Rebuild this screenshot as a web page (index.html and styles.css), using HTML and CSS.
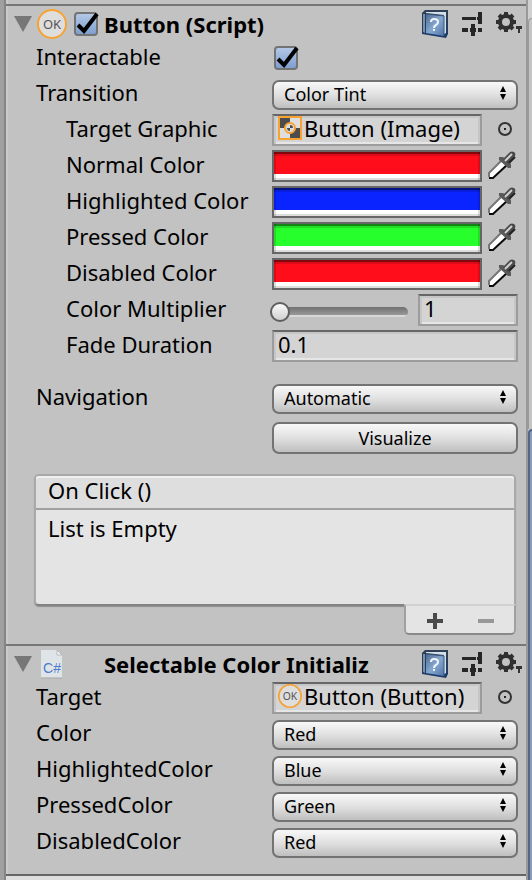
FILE: index.html
```html
<!DOCTYPE html>
<html lang="en">
<head>
<meta charset="utf-8">
<meta name="viewport" content="width=device-width">
<title>Inspector</title>
<link rel="stylesheet" href="styles.css">
</head>
<body>
<svg class="defs" aria-hidden="true">
  <defs>
    <linearGradient id="cover" x1="0" y1="0" x2="1" y2="1">
      <stop offset="0" stop-color="#4a6a94"/><stop offset=".5" stop-color="#86a8d0"/><stop offset="1" stop-color="#4f75a6"/>
    </linearGradient>
    <linearGradient id="edge" x1="0" y1="0" x2="0" y2="1">
      <stop offset="0" stop-color="#2f4054"/><stop offset="1" stop-color="#1a3c6c"/>
    </linearGradient>
    <symbol id="book" viewBox="0 0 26 28">
      <path d="M0 3 3 0h23v24l-2 4-6-1L0 24z" fill="url(#edge)"/>
      <path d="M4 2h20v21l-2 1V5L4 3z" fill="#d5dfe9"/>
      <path d="M1 4h2v19l-2-1z" fill="#7d90a8"/>
      <path d="M4 4l18 2v20L4 23z" fill="url(#cover)"/>
      <path d="M4 4l18 2v20" fill="none" stroke="#3a567c"/>
      <path d="M9 12q0-3 3-3 4 0 4 3 0 2-2 3-2 1-2 3" fill="none" stroke="#f0f5fb" stroke-width="2"/>
      <rect x="11" y="19" width="2" height="2" fill="#f0f5fb"/>
    </symbol>
    <symbol id="preset" viewBox="0 0 20 24">
      <path d="M0 5h14v3H0zM16 0h4v12h-4V8h-1V5h1zM0 16h6v4H0zM9 12h4v4h1v4h-1v4H9v-4H8v-4h1zM16 16h4v4h-4z" fill="#262626"/>
    </symbol>
    <symbol id="gear" viewBox="0 0 26 24">
      <circle cx="10" cy="10" r="6" fill="none" stroke="#303030" stroke-width="4"/>
      <path d="M10 0v4M10 16v4M0 10h4M16 10h4M3 3l3 3M14 14l3 3M17 3l-3 3M6 14l-3 3" stroke="#303030" stroke-width="4"/>
      <path d="M20 14h6v3h-2v4h-2v-4h-2z" fill="#333"/>
    </symbol>
    <symbol id="ring" viewBox="0 0 16 16">
      <circle cx="8" cy="8" r="6" fill="none" stroke="#333" stroke-width="2"/>
      <rect x="7" y="7" width="2" height="2" fill="#222"/>
    </symbol>
    <symbol id="dropper" viewBox="0 0 28 28">
      <path d="M1 27v-5L15 8l5 5L6 26z" fill="#fff"/>
      <path d="M1 26v-4L15 8" fill="none" stroke="#777" stroke-width="2"/>
      <path d="M1 27h4L20 13" fill="none" stroke="#0a0a0a" stroke-width="2"/>
      <path d="M11 6h4l8 7v4h-3l-9-8z" fill="#5a5a5a"/>
      <path d="M15 8l7-7q2-1 4 0 2 1 1 4l-7 8z" fill="#4a4a4a"/>
      <path d="M17 10l7-7" stroke="#d0d0d0" stroke-width="2"/>
      <path d="M21 12l6-6" stroke="#222" stroke-width="2"/>
    </symbol>
    <symbol id="ok" viewBox="0 0 30 30">
      <circle cx="15" cy="15" r="14" fill="#dedede" stroke="#f7a233" stroke-width="2"/>
      <text x="15" y="20" text-anchor="middle" class="ok-text">OK</text>
    </symbol>
    <symbol id="image" viewBox="0 0 24 24">
      <rect x="1" y="1" width="22" height="22" fill="#dedede" stroke="#f7a233" stroke-width="2"/>
      <path d="M2 2h10v10H2zM12 12h10v10H12z" fill="#4c4c4c"/>
      <circle cx="12" cy="12" r="5" fill="#ddd" stroke="#f7a233" stroke-width="2"/>
      <path d="M12 9v3h3a3 3 0 0 0-3-3zM12 15v-3H9a3 3 0 0 0 3 3z" fill="#4c4c4c"/>
    </symbol>
    <symbol id="csharp" viewBox="0 0 22 30">
      <path d="M0 1h16l5 5v23H0z" fill="#dfe4e8"/>
      <path d="M16 1v5h5z" fill="#f7f7f7" stroke="#b5babd"/>
      <path d="M0 29h21" stroke="#a5a5a5"/>
      <text x="11" y="24" text-anchor="middle" class="cs-text">C#</text>
    </symbol>
  </defs>
</svg>
<div class="window">
  <div class="gutter"></div>
  <main class="inspector">
    <section class="component">
      <header class="head">
        <button class="fold" aria-label="Collapse Button"></button>
        <svg class="type" viewBox="0 0 30 30"><use href="#ok"/></svg>
        <span class="toggle"><input type="checkbox" checked aria-label="Enable Button"><svg viewBox="0 0 28 28"><path d="M6 15l6 6L25 4"/></svg></span>
        <h2>Button (Script)</h2>
        <button class="tool book" aria-label="Help"><svg><use href="#book"/></svg></button>
        <button class="tool preset" aria-label="Presets"><svg><use href="#preset"/></svg></button>
        <button class="tool gear" aria-label="Settings"><svg><use href="#gear"/></svg></button>
      </header>
      <div class="fields">
        <div class="row"><label for="interactable">Interactable</label>
          <span class="toggle"><input id="interactable" type="checkbox" checked><svg viewBox="0 0 28 28"><path d="M6 15l6 6L25 4"/></svg></span></div>
        <div class="row"><label for="transition">Transition</label>
          <div class="popup"><select id="transition"><option>Color Tint</option></select><svg viewBox="0 0 6 14"><path d="M3 0l3 6H0zM0 8h6l-3 6z"/></svg></div></div>
        <div class="row sub"><span class="label">Target Graphic</span>
          <div class="pair"><button class="well object"><svg viewBox="0 0 24 24"><use href="#image"/></svg>Button (Image)</button><button class="pick" aria-label="Select graphic"><svg><use href="#ring"/></svg></button></div></div>
        <div class="row sub"><span class="label">Normal Color</span>
          <div class="pair"><button class="swatch red" aria-label="Normal Color"></button><button class="pick drop" aria-label="Sample normal color"><svg><use href="#dropper"/></svg></button></div></div>
        <div class="row sub"><span class="label">Highlighted Color</span>
          <div class="pair"><button class="swatch blue" aria-label="Highlighted Color"></button><button class="pick drop" aria-label="Sample highlighted color"><svg><use href="#dropper"/></svg></button></div></div>
        <div class="row sub"><span class="label">Pressed Color</span>
          <div class="pair"><button class="swatch green" aria-label="Pressed Color"></button><button class="pick drop" aria-label="Sample pressed color"><svg><use href="#dropper"/></svg></button></div></div>
        <div class="row sub"><span class="label">Disabled Color</span>
          <div class="pair"><button class="swatch red" aria-label="Disabled Color"></button><button class="pick drop" aria-label="Sample disabled color"><svg><use href="#dropper"/></svg></button></div></div>
        <div class="row sub"><label for="multiplier">Color Multiplier</label>
          <div class="slide"><input type="range" min="1" max="5" value="1" aria-label="Color Multiplier slider"><input id="multiplier" class="well" type="text" value="1"></div></div>
        <div class="row sub"><label for="fade">Fade Duration</label><input id="fade" class="well" type="text" value="0.1"></div>
        <div class="row apart"><label for="navigation">Navigation</label>
          <div class="popup"><select id="navigation"><option>Automatic</option></select><svg viewBox="0 0 6 14"><path d="M3 0l3 6H0zM0 8h6l-3 6z"/></svg></div></div>
        <div class="row action"><button class="push">Visualize</button></div>
      </div>
      <div class="event">
        <div class="list">
          <h3>On Click ()</h3>
          <p>List is Empty</p>
        </div>
        <div class="foot">
          <button aria-label="Add"><svg viewBox="0 0 16 16"><path d="M6 0h4v6h6v4h-6v6H6v-6H0V6h6z"/></svg></button>
          <button aria-label="Remove" disabled><svg viewBox="0 0 16 16"><path d="M0 6h16v4H0z"/></svg></button>
        </div>
      </div>
    </section>
    <section class="component">
      <header class="head">
        <button class="fold" aria-label="Collapse Selectable Color Initializer"></button>
        <svg class="type" viewBox="-4 0 30 30"><use href="#csharp" width="22" height="30"/></svg>
        <span class="toggle"></span>
        <h2>Selectable Color Initializ</h2>
        <button class="tool book" aria-label="Help"><svg><use href="#book"/></svg></button>
        <button class="tool preset" aria-label="Presets"><svg><use href="#preset"/></svg></button>
        <button class="tool gear" aria-label="Settings"><svg><use href="#gear"/></svg></button>
      </header>
      <div class="fields">
        <div class="row"><span class="label">Target</span>
          <div class="pair"><button class="well object"><svg viewBox="0 0 30 30"><use href="#ok"/></svg>Button (Button)</button><button class="pick" aria-label="Select target"><svg><use href="#ring"/></svg></button></div></div>
        <div class="row"><label for="c1">Color</label>
          <div class="popup"><select id="c1"><option>Red</option></select><svg viewBox="0 0 6 14"><path d="M3 0l3 6H0zM0 8h6l-3 6z"/></svg></div></div>
        <div class="row"><label for="c2">HighlightedColor</label>
          <div class="popup"><select id="c2"><option>Blue</option></select><svg viewBox="0 0 6 14"><path d="M3 0l3 6H0zM0 8h6l-3 6z"/></svg></div></div>
        <div class="row"><label for="c3">PressedColor</label>
          <div class="popup"><select id="c3"><option>Green</option></select><svg viewBox="0 0 6 14"><path d="M3 0l3 6H0zM0 8h6l-3 6z"/></svg></div></div>
        <div class="row"><label for="c4">DisabledColor</label>
          <div class="popup"><select id="c4"><option>Red</option></select><svg viewBox="0 0 6 14"><path d="M3 0l3 6H0zM0 8h6l-3 6z"/></svg></div></div>
      </div>
    </section>
  </main>
  <aside class="edge"><div class="upper"></div><div class="lower"></div></aside>
</div>
</body>
</html>
```
FILE: styles.css
```css
* { box-sizing: border-box; }
body {
  margin: 0;
  background: #c2c2c2;
  color: #000;
  font: 22px/28px "Noto Sans", "Open Sans", sans-serif;
}
.defs { position: absolute; width: 0; height: 0; }
button, input, select { font: inherit; color: inherit; margin: 0; }
button { padding: 0; border: 0; background: none; }
svg { display: block; }
.ok-text { font: 13px "Noto Sans", sans-serif; fill: #555; }
.cs-text { font: 14px "Liberation Sans", sans-serif; fill: #4d7bcb; }

.window { display: flex; min-height: 100vh; }
.gutter {
  width: 6px;
  background: #a0a0a0;
  border-right: 2px solid #858585;
}
.inspector {
  flex: 1;
  min-width: 0;
  padding-top: 4px;
  border-left: 2px solid #cbcbcb;
}
.component { border-top: 2px solid #777; margin-left: -2px; }
.component:last-child { border-bottom: 2px solid #666; padding-bottom: 16px; box-shadow: 0 4px #dedede; }

.head { display: flex; align-items: center; height: 36px; padding: 0 4px 0 8px; }
.fold {
  width: 18px;
  height: 16px;
  background: #777;
  clip-path: polygon(0 0, 100% 0, 50% 100%);
}
.type { width: 30px; height: 30px; margin: 0 5px; }
.toggle { position: relative; width: 28px; height: 28px; padding: 2px; flex: none; }
.toggle input {
  appearance: none;
  display: block;
  width: 24px;
  height: 24px;
  border: 2px solid #737373;
  border-radius: 4px;
  background: linear-gradient(#b4c8e6, #7f9fd0);
}
.toggle svg { position: absolute; inset: 0; pointer-events: none; }
.toggle path { fill: none; stroke: #000; stroke-width: 4; }
.head h2 {
  flex: 1;
  min-width: 0;
  margin: 0 44px 0 4px;
  overflow: hidden;
  white-space: nowrap;
  font-size: 22px;
  line-height: 32px;
}
.tool svg { width: 100%; height: 100%; }
.tool { flex: none; }
.tool.book { width: 26px; height: 28px; }
.tool.preset { width: 20px; height: 24px; margin: 0 14px; }
.tool.gear { width: 26px; height: 24px; }

.fields { display: grid; gap: 4px; padding: 0 8px 0 30px; }
.row { display: grid; grid-template-columns: 236px minmax(0, 1fr); height: 32px; }
.row > label, .row > .label { white-space: nowrap; line-height: 28px; }
.row.sub > label, .row.sub > .label { padding-left: 30px; }
.row.apart { margin-top: 16px; }
.row.action { margin-top: 4px; }
.row > .toggle { margin-top: 2px; }

.popup { position: relative; height: 30px; }
.popup select, .push {
  width: 100%;
  height: 100%;
  border: 2px solid #737373;
  border-radius: 7px;
  background: linear-gradient(#f8f8f8, #e0e0e0 50%, #c0bfc0);
  font-size: 18px;
  line-height: 24px;
}
.popup select { appearance: none; padding: 0 10px 2px; }
.popup svg { position: absolute; right: 12px; top: 8px; width: 6px; height: 14px; pointer-events: none; }
.push { grid-column: 2; height: 32px; }

.well {
  width: 100%;
  min-width: 0;
  height: 32px;
  padding: 0 4px 4px;
  border: 2px solid #9c9c9c;
  border-top-color: #666;
  border-radius: 0;
  background: #d4d4d4;
  box-shadow: inset 2px 0 #c6c6c6, inset -2px 0 #c6c6c6, inset 0 2px #c6c6c6, inset 0 -2px #e6e6e6;
  text-align: left;
  line-height: 24px;
}
.pair { display: grid; grid-template-columns: minmax(0, 1fr) 36px; }
.object { display: flex; align-items: center; gap: 2px; white-space: nowrap; }
.object svg { width: 24px; height: 24px; flex: none; }
.pick { display: grid; place-items: center; padding: 0 0 2px 10px; }
.pick svg { width: 16px; height: 16px; }
.pick.drop { padding-left: 4px; }
.pick.drop svg { width: 28px; height: 28px; }
.swatch {
  height: 32px;
  border: 2px solid #666;
  box-shadow: inset 0 2px #0006, inset 2px 0 #0002, inset -2px 0 #0002, inset 0 4px #0002, inset 0 -2px #0002;
}
.red { background: linear-gradient(#ff0d1b 22px, #fff 22px); }
.blue { background: linear-gradient(#0a24ff 22px, #fff 22px); }
.green { background: linear-gradient(#27ff2c 22px, #fff 22px); }

.slide { display: grid; grid-template-columns: minmax(0, 1fr) 100px; column-gap: 10px; }
.slide input[type="range"] {
  appearance: none;
  height: 20px;
  margin: 8px 0 0 -2px;
  background: none;
}
.slide input::-webkit-slider-runnable-track {
  height: 10px;
  border-radius: 5px;
  background: linear-gradient(#707070, #999 80%, #d8d8d8 80%);
}
.slide input::-webkit-slider-thumb {
  appearance: none;
  width: 20px;
  height: 20px;
  margin-top: -5px;
  border: 2px solid #5e5e5e;
  border-radius: 50%;
  background: linear-gradient(#fafafa, #cfcfcf);
}

.event { padding: 20px 10px 9px 28px; }
.list {
  height: 132px;
  border: 2px solid #a9a9a9;
  border-bottom-color: #838383;
  border-radius: 5px 5px 0 5px;
  background: #e4e4e4;
  box-shadow: 0 1px 1px #0004;
}
.list h3 {
  height: 34px;
  margin: 0;
  padding: 0 12px;
  border-bottom: 2px solid #a0a0a0;
  border-radius: 3px 3px 0 0;
  background: #dedede;
  box-shadow: inset 0 2px #f0f0f0;
  font-size: 22px;
  font-weight: 400;
  line-height: 28px;
}
.list p { margin: 0; padding: 4px 12px; line-height: 28px; }
.foot {
  position: relative;
  display: flex;
  justify-content: space-between;
  width: 112px;
  height: 31px;
  margin: -2px 0 0 auto;
  padding: 2px 20px 0 21px;
  border: 2px solid #a0a0a0;
  border-top-color: #d2d2d2;
  border-bottom-color: #8a8a8a;
  border-radius: 0 0 5px 5px;
  background: #e4e4e4;
}
.foot svg { width: 16px; height: 16px; fill: #4a4a4a; }
.foot button:disabled svg { fill: #989898; }

.edge { display: flex; flex-direction: column; width: 6px; border-left: 2px solid #999; background: #d0d0d0; }
.upper { flex: 411; margin-top: 18px; background: #c4c4c4; border-left: 1px solid #999; border-top: 1px solid #999; border-radius: 5px 0 0 0; }
.lower { flex: 451; background: #8d9bb4; border-left: 2px solid #54658a; border-top: 2px solid #54658a; border-radius: 5px 0 0 0; }
```
